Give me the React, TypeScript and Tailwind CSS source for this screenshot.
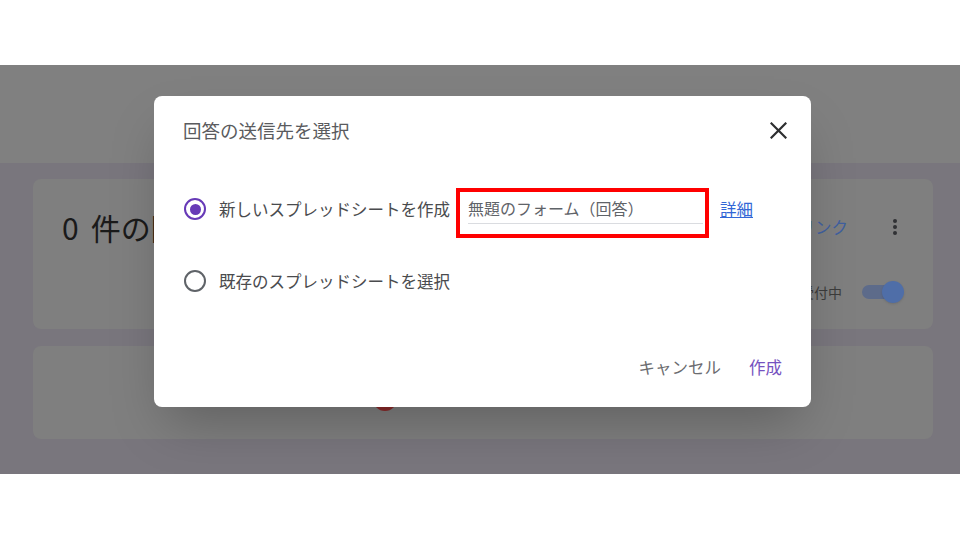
import React from 'react';

const jp = { fontFamily: '"Noto Sans CJK JP", "Noto Sans", Roboto, sans-serif' };

const Radio: React.FC<{ checked?: boolean }> = ({ checked }) => (
	<span
		className={
			'flex h-[22px] w-[22px] shrink-0 items-center justify-center rounded-full border-[2.5px] ' +
			(checked ? 'border-[#673ab7]' : 'border-[#5f6368]')
		}
	>
		{checked && <span className="h-[11px] w-[11px] rounded-full bg-[#673ab7]" />}
	</span>
);

const Toggle: React.FC = () => (
	<div className="relative h-[22px] w-[42px] shrink-0">
		<div className="absolute left-0 top-[4px] h-[14px] w-[38px] rounded-full bg-[#5d6b8a]" />
		<div className="absolute right-0 top-0 h-[22px] w-[22px] rounded-full bg-[#4f6ea8] shadow" />
	</div>
);

const Kebab: React.FC = () => (
	<div className="flex h-[28px] w-[28px] flex-col items-center justify-center gap-[2px]">
		<span className="h-[4px] w-[4px] rounded-full bg-[#303134]" />
		<span className="h-[4px] w-[4px] rounded-full bg-[#303134]" />
		<span className="h-[4px] w-[4px] rounded-full bg-[#303134]" />
	</div>
);

// 回答の送信先ダイアログ
const DestinationDialog: React.FC = () => (
	<div className="absolute left-[154px] top-[31px] flex h-[311px] w-[657px] flex-col rounded-lg bg-white shadow-2xl">
		<div className="mt-[22px] flex h-[24px] items-center justify-between pl-[29px] pr-[21px]">
			<h2 className="text-[18.5px] leading-[24px] text-[#5a5b5e]">回答の送信先を選択</h2>
			<button className="flex h-[24px] w-[24px] items-center justify-center">
				<svg width="17" height="17" viewBox="0 0 17 17">
					<path d="M1.5 1.5 L15.5 15.5 M15.5 1.5 L1.5 15.5" stroke="#2d2e30" strokeWidth="2.2" strokeLinecap="square" />
				</svg>
			</button>
		</div>

		<div className="mt-[46px] flex items-start pl-[30px]">
			<div className="mt-[10px]">
				<Radio checked />
			</div>
			<span className="ml-[13px] mt-[10px] text-[16.5px] leading-[22px] text-[#4a4b4e]">
				新しいスプレッドシートを作成
			</span>
			<div className="ml-[6px] h-[50px] w-[253px] border-[4px] border-[#ff0000] pl-[8px] pr-[2px] pt-[5px]">
				<div className="border-b border-[#dadce0] pb-[4px] text-[16px] leading-[22px] text-[#5f6368]">
					無題のフォーム（回答）
				</div>
			</div>
			<a className="ml-[11px] mt-[10px] text-[16.5px] leading-[22px] text-[#3367d6] underline">詳細</a>
		</div>

		<div className="mt-[32px] flex h-[22px] items-center pl-[30px]">
			<Radio />
			<span className="ml-[13px] text-[16.5px] leading-[22px] text-[#4a4b4e]">既存のスプレッドシートを選択</span>
		</div>

		<div className="mt-[63px] flex items-center justify-end gap-[28px] pr-[29px]">
			<button className="text-[16.5px] leading-[24px] text-[#6b6c6f]">キャンセル</button>
			<button className="text-[16.5px] leading-[24px] text-[#7652c0]">作成</button>
		</div>
	</div>
);

export default function App() {
	return (
		<div className="h-[540px] w-[960px] overflow-hidden bg-white pt-[65px]" style={jp}>
			<div className="relative h-[409px] overflow-hidden bg-[#79767d]">
				<div className="h-[98px] bg-[#808080]" />

				<div className="ml-[33px] mt-[16px] flex h-[150px] w-[900px] flex-col rounded-lg bg-[#7f7f7f] pl-[29px] pr-[24px] pt-[30px]">
					<div className="flex h-[36px] items-center justify-between">
						<span className="flex items-center text-[30px] leading-[36px] text-[#1a1a1a]">
							<span>0</span>
							<span className="ml-[12px]">件の回答</span>
						</span>
						<div className="flex items-center gap-[33px]">
							<span className="text-[16.5px] text-[#40609f]">スプレッドシートにリンク</span>
							<Kebab />
						</div>
					</div>
					<div className="mt-[35px] flex h-[24px] items-center justify-end gap-[20px] pr-[5px]">
						<span className="text-[14px] text-[#3c3c3c]">回答を受付中</span>
						<Toggle />
					</div>
				</div>

				<div className="ml-[33px] mt-[17px] h-[93px] w-[900px] rounded-lg bg-[#7f7f7f] pl-[340px] pt-[41px]">
					<div className="h-[24px] w-[24px] rounded-full bg-[#8a2a2a]" />
				</div>

				<DestinationDialog />
			</div>
		</div>
	);
}
